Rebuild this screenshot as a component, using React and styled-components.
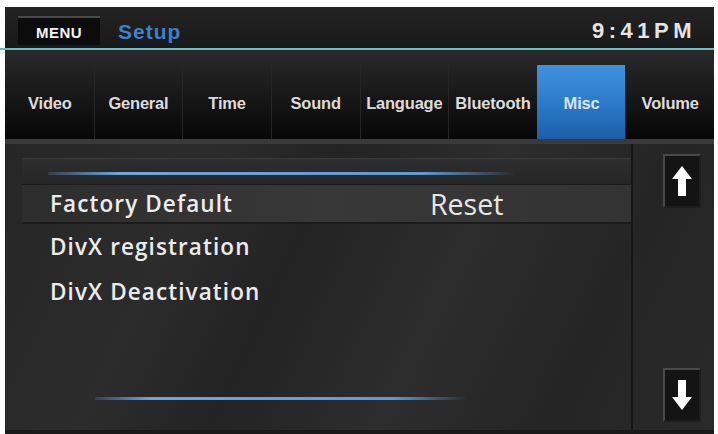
import styled, { createGlobalStyle } from 'styled-components'

const GlobalStyle = createGlobalStyle`
  html, body {
    margin: 0;
    padding: 0;
    background: #ffffff;
  }
  body {
    font-family: "Liberation Sans", Arial, sans-serif;
  }
`

const Page = styled.div`
  width: 718px;
  height: 434px;
  padding: 7px 4px 0 5px;
  box-sizing: border-box;
  overflow: hidden;
`

const Screen = styled.div`
  height: 427px;
  display: flex;
  flex-direction: column;
  background: #111;
`

const Header = styled.div`
  height: 41px;
  display: flex;
  align-items: flex-end;
  padding: 0 22px 0 13px;
  background: linear-gradient(#232323, #191919);
`

const MenuButton = styled.div`
  width: 82px;
  height: 29px;
  box-sizing: border-box;
  border-top: 2px solid #4a4a4a;
  background: #0c0c0c;
  color: #f2f2f2;
  font-weight: bold;
  font-size: 15px;
  letter-spacing: 0.5px;
  display: flex;
  align-items: center;
  justify-content: center;
  padding-top: 2px;
  margin-bottom: 3px;
`

const Title = styled.div`
  margin-left: 18px;
  margin-bottom: 4px;
  color: #3b82cc;
  font-weight: bold;
  font-size: 21px;
  letter-spacing: 1px;
`

const Clock = styled.div`
  margin-left: auto;
  margin-bottom: 4px;
  color: #e4e4e4;
  font-weight: bold;
  font-size: 22px;
  letter-spacing: 4.5px;
  margin-right: -4px;
`

const TealLine = styled.div`
  height: 2px;
  margin-left: -5px;
  background: #5fc4c0;
`

const TabBar = styled.div`
  height: 94px;
  display: grid;
  grid-template-columns: repeat(8, 1fr);
  padding-top: 15px;
  box-sizing: border-box;
  background: linear-gradient(#2a2a2a 0%, #1a1a1a 45%, #070707 100%);
  border-bottom: 5px solid #3a3a3a;
`

const Tab = styled.div`
  display: flex;
  align-items: center;
  justify-content: center;
  padding-top: 2px;
  font-size: 16.5px;
  font-weight: bold;
  letter-spacing: -0.2px;
  white-space: nowrap;
  color: ${(p) => (p.$active ? '#d8e8f8' : '#dcdcdc')};
  border-left: 1px solid ${(p) => (p.$first || p.$active ? 'transparent' : '#262626')};
  background: ${(p) =>
    p.$active ? 'linear-gradient(#3f93de, #2a78c8 55%, #1c5ea8)' : 'transparent'};
`

const Content = styled.div`
  flex: 1;
  display: flex;
  background: linear-gradient(115deg, #262626 0%, #2c2c2c 25%, #232323 40%, #2d2d2d 60%, #252525 80%, #2a2a2a 100%);
  border-bottom: 4px solid #1a1a1a;
`

const ListPanel = styled.div`
  width: 609px;
  margin-left: 17px;
  padding-top: 14px;
  display: flex;
  flex-direction: column;
  border-right: 2px solid #161616;
`

const GlowLine = styled.div`
  height: 3px;
  width: ${(p) => p.$width}px;
  margin-left: ${(p) => p.$left}px;
  border-radius: 2px;
  background: linear-gradient(90deg, rgba(90, 150, 210, 0.2), #6aa8e0 15%, #5b9bd8 80%, rgba(90, 150, 210, 0));
`

const TopStrip = styled.div`
  height: 26px;
  box-sizing: border-box;
  display: flex;
  flex-direction: column;
  justify-content: flex-end;
  padding-bottom: 9px;
  border-top: 1px solid #3a3a3a;
  background: linear-gradient(#2e2e2e, #262626);
`

const Row = styled.div`
  height: ${(p) => (p.$highlight ? 40 : 45)}px;
  display: flex;
  align-items: center;
  padding-left: 28px;
  box-sizing: border-box;
  color: #ececec;
  font-family: "Open Sans", "Liberation Sans", sans-serif;
  font-weight: 600;
  font-size: 22.5px;
  letter-spacing: 1.1px;
  background: ${(p) =>
    p.$highlight ? 'linear-gradient(90deg, #2d2d2d, #383838 50%, #333333)' : 'transparent'};
  border-top: ${(p) => (p.$highlight ? '1px solid #1b1b1b' : 'none')};
  border-bottom: ${(p) => (p.$highlight ? '2px solid #1b1b1b' : 'none')};
`

const RowLabel = styled.span`
  width: 380px;
`

const RowValue = styled.span`
  font-weight: 400;
  font-size: 28.5px;
  letter-spacing: 0;
  color: #e6e6e6;
`

const Spacer = styled.div`
  flex: 1;
`

const BottomLine = styled.div`
  padding-bottom: 30px;
`

const ScrollColumn = styled.div`
  flex: 1;
  display: flex;
  flex-direction: column;
  justify-content: space-between;
  align-items: center;
  padding: 10px 0 8px 17px;
`

const ArrowButton = styled.div`
  width: 38px;
  height: 54px;
  box-sizing: border-box;
  border: 2px solid #4a4a4a;
  border-right-color: #1e1e1e;
  border-bottom-color: #1e1e1e;
  background: #141414;
  display: flex;
  align-items: center;
  justify-content: center;
`

function Arrow({ down }) {
  return (
    <svg width="22" height="32" viewBox="0 0 22 32" style={{ transform: down ? 'rotate(180deg)' : 'none' }}>
      <path d="M11 1 L21 14 L15 14 L15 31 L7 31 L7 14 L1 14 Z" fill="#ffffff" />
    </svg>
  )
}

const tabs = ['Video', 'General', 'Time', 'Sound', 'Language', 'Bluetooth', 'Misc', 'Volume']

export default function App() {
  return (
    <Page>
      <GlobalStyle />
      <Screen>
        <Header>
          <MenuButton>MENU</MenuButton>
          <Title>Setup</Title>
          <Clock>9:41PM</Clock>
        </Header>
        <TealLine />
        <TabBar>
          {tabs.map((t, i) => (
            <Tab key={t} $first={i === 0} $active={t === 'Misc'}>
              {t}
            </Tab>
          ))}
        </TabBar>
        <Content>
          <ListPanel>
            <TopStrip>
              <GlowLine $left={26} $width={468} />
            </TopStrip>
            <Row $highlight>
              <RowLabel>Factory Default</RowLabel>
              <RowValue>Reset</RowValue>
            </Row>
            <Row>DivX registration</Row>
            <Row>DivX Deactivation</Row>
            <Spacer />
            <BottomLine>
              <GlowLine $left={73} $width={372} />
            </BottomLine>
          </ListPanel>
          <ScrollColumn>
            <ArrowButton>
              <Arrow />
            </ArrowButton>
            <ArrowButton>
              <Arrow down />
            </ArrowButton>
          </ScrollColumn>
        </Content>
      </Screen>
    </Page>
  )
}
